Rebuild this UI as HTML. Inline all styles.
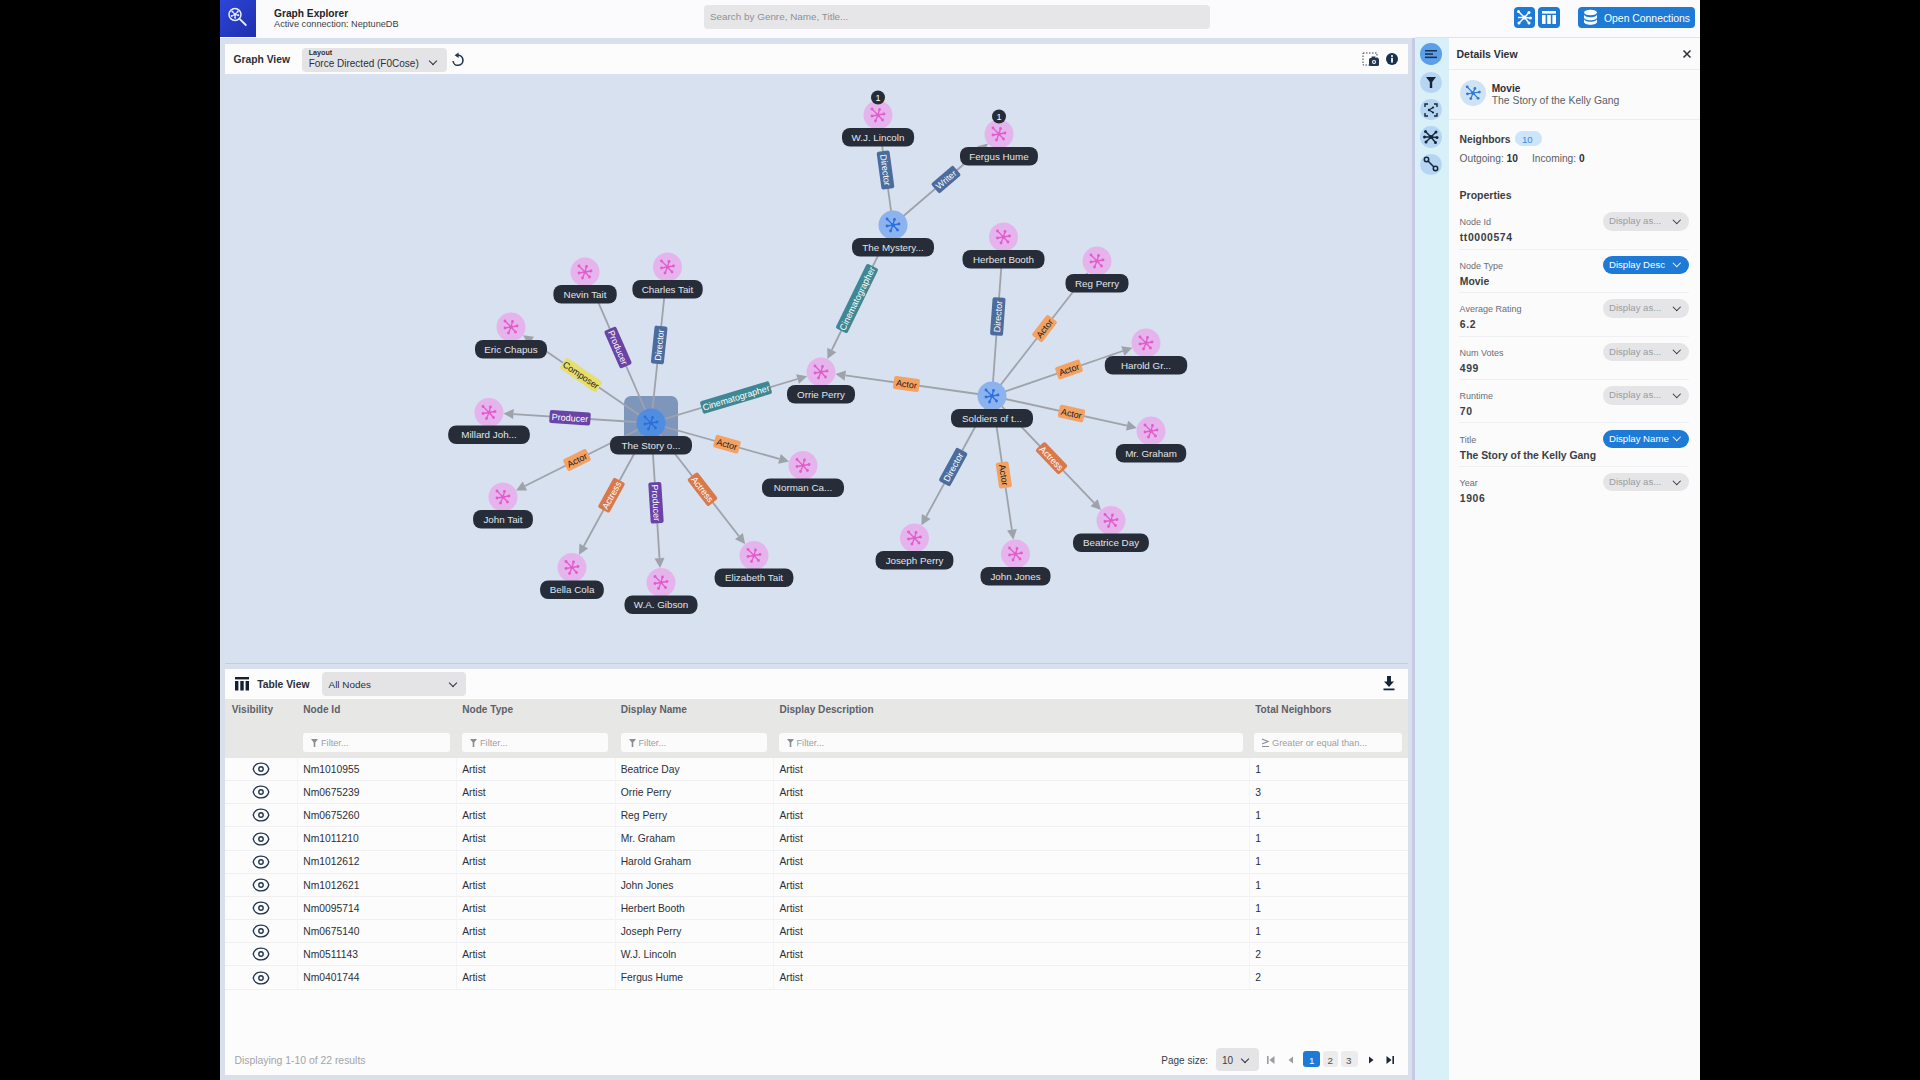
<!DOCTYPE html>
<html><head><meta charset="utf-8"><title>Graph Explorer</title>
<style>
*{box-sizing:border-box;margin:0;padding:0}
html,body{width:1920px;height:1080px;overflow:hidden;background:#000;font-family:"Liberation Sans",sans-serif;color:#2b2f36}
.abs{position:absolute}
#app{position:absolute;left:220px;top:0;width:1480px;height:1080px;background:#d7e0ec}
#hdr{position:absolute;left:220px;top:0;width:1480px;height:38px;background:#fbfbfd}
.t{position:absolute;white-space:nowrap;line-height:1;margin-top:1px}
.b{font-weight:700}
.panel{position:absolute;background:#fcfcfd}
.btn{position:absolute;background:#1d7ad6;border-radius:4px}
.sel{position:absolute;background:#e4e4e6;border-radius:4px}
.chev{position:absolute;width:6px;height:6px;border-right:1.6px solid #2b2f36;border-bottom:1.6px solid #2b2f36;transform:rotate(45deg)}
</style></head><body>
<div id="app"></div>
<div id="hdr"></div>
<!-- header -->
<div class="abs" style="left:220px;top:0;width:36px;height:37px;background:linear-gradient(135deg,#2c46d8,#1f2fae)"></div>
<svg class="abs" style="left:227px;top:6px" width="22" height="22" viewBox="0 0 22 22">
 <circle cx="8" cy="8.4" r="6" fill="none" stroke="#e8ecff" stroke-width="1.5"/>
 <line x1="12.3" y1="12.7" x2="18.8" y2="19" stroke="#e8ecff" stroke-width="1.8" stroke-linecap="round"/>
 <g stroke="#e8ecff" stroke-width="1.1"><line x1="8" y1="8.4" x2="5.3" y2="5.4"/><line x1="8" y1="8.4" x2="10.8" y2="5.6"/><line x1="8" y1="8.4" x2="11.3" y2="9.3"/><line x1="8" y1="8.4" x2="8.1" y2="11.8"/><line x1="8" y1="8.4" x2="4.6" y2="9.9"/></g>
 <g fill="#e8ecff"><circle cx="8" cy="8.4" r="1.3"/><circle cx="5.3" cy="5.4" r="1"/><circle cx="10.8" cy="5.6" r="1"/><circle cx="11.3" cy="9.3" r="1"/><circle cx="8.1" cy="11.8" r="1"/><circle cx="4.6" cy="9.9" r="1"/></g>
</svg>
<div class="t b" style="left:274px;top:8px;font-size:10.2px;color:#1f2328">Graph Explorer</div>
<div class="t" style="left:274px;top:19px;font-size:9.2px;color:#3a3f46">Active connection: NeptuneDB</div>
<div class="abs" style="left:704px;top:5px;width:506px;height:24px;background:#e6e6e8;border-radius:4px"></div>
<div class="t" style="left:710px;top:11.3px;font-size:9.9px;color:#8e9095">Search by Genre, Name, Title...</div>
<div class="btn" style="left:1514px;top:7px;width:21px;height:21px"></div>
<svg class="abs" style="left:1514px;top:7px" width="21" height="21" viewBox="0 0 21 21">
 <g stroke="#fff" stroke-width="1.5"><line x1="10.5" y1="10.5" x2="4.5" y2="4.5"/><line x1="10.5" y1="10.5" x2="15" y2="5.5"/><line x1="10.5" y1="10.5" x2="16.5" y2="11"/><line x1="10.5" y1="10.5" x2="15" y2="16"/><line x1="10.5" y1="10.5" x2="5" y2="16"/><line x1="10.5" y1="10.5" x2="4" y2="10.5"/></g>
 <g fill="#fff"><circle cx="10.5" cy="10.5" r="2"/><circle cx="4.5" cy="4.5" r="1.5"/><circle cx="15" cy="5.5" r="1.5"/><circle cx="16.5" cy="11" r="1.5"/><circle cx="15" cy="16" r="1.5"/><circle cx="5" cy="16" r="1.5"/></g>
</svg>
<div class="btn" style="left:1538px;top:7px;width:22px;height:21px"></div>
<svg class="abs" style="left:1538px;top:7px" width="22" height="21" viewBox="0 0 22 21">
 <rect x="4" y="4" width="14" height="2.6" fill="#fff"/><rect x="4" y="8" width="3.6" height="9" fill="#fff"/><rect x="9.2" y="8" width="3.6" height="9" fill="#fff"/><rect x="14.4" y="8" width="3.6" height="9" fill="#fff"/>
</svg>
<div class="btn" style="left:1578px;top:7px;width:117px;height:21px"></div>
<svg class="abs" style="left:1583px;top:9px" width="16" height="17" viewBox="0 0 16 17">
 <ellipse cx="7.5" cy="3.5" rx="6.5" ry="2.8" fill="#fff"/>
 <path d="M1 5.5 v3 c0 1.6 2.9 2.8 6.5 2.8 s6.5-1.2 6.5-2.8 v-3 c0 1.6-2.9 2.8-6.5 2.8 S1 7.1 1 5.5z" fill="#fff"/>
 <path d="M1 10 v3 c0 1.6 2.9 2.8 6.5 2.8 s6.5-1.2 6.5-2.8 v-3 c0 1.6-2.9 2.8-6.5 2.8 S1 11.6 1 10z" fill="#fff"/>
</svg>
<div class="t" style="left:1604px;top:13px;font-size:10.4px;color:#fff">Open Connections</div>

<!-- graph panel -->
<div class="panel" style="left:225px;top:44px;width:1183px;height:30px"></div>
<div class="t b" style="left:233.5px;top:54px;font-size:10.3px;color:#2b2f36">Graph View</div>
<div class="sel" style="left:302px;top:47.5px;width:145px;height:24.5px"></div>
<div class="t b" style="left:308.7px;top:48px;font-size:7.2px;color:#2b2f36">Layout</div>
<div class="t" style="left:308.7px;top:57.5px;font-size:10px;color:#2b2f36">Force Directed (F0Cose)</div>
<div class="chev" style="left:430px;top:57.5px"></div>
<svg class="abs" style="left:450px;top:51px" width="15" height="15" viewBox="0 0 15 15">
 <path d="M3 10 A5 5 0 1 0 7.6 4.3" fill="none" stroke="#22364f" stroke-width="1.6"/>
 <polygon points="4.6,4.3 8.6,1.6 8.6,7" fill="#22364f"/>
</svg>
<svg class="abs" style="left:1362px;top:52px" width="18" height="15" viewBox="0 0 18 15">
 <rect x="1" y="1" width="14" height="12" fill="none" stroke="#3a4658" stroke-width="1" stroke-dasharray="1.5 1.5"/>
 <rect x="7" y="6" width="10" height="8" rx="1.5" fill="#22364f"/><rect x="9.5" y="4.5" width="4" height="2" fill="#22364f"/>
 <circle cx="12" cy="10" r="2" fill="#fff"/><circle cx="12" cy="10" r="1" fill="#22364f"/>
</svg>
<svg class="abs" style="left:1385px;top:52px" width="14" height="14" viewBox="0 0 14 14">
 <circle cx="7" cy="7" r="6" fill="#16324f"/><rect x="6.1" y="5.8" width="1.8" height="4.8" fill="#fff"/><circle cx="7" cy="3.9" r="1" fill="#fff"/>
</svg>
<div class="abs" style="left:225px;top:74px;width:1183px;height:589px;background:#d8e1ef;overflow:hidden">
<svg width="1183" height="589" viewBox="225 74 1183 589" style="position:absolute;left:0;top:0">
<rect x="624" y="396" width="54" height="54" rx="7" fill="#7f96bc"/>
<line x1="651" y1="423" x2="594.8" y2="294.4" stroke="#9ea3ab" stroke-width="1.8"/>
<polygon points="590.8,285.3 599.4,292.4 590.2,296.5" fill="#9ea3ab"/>
<line x1="651" y1="423" x2="664.9" y2="291.4" stroke="#9ea3ab" stroke-width="1.8"/>
<polygon points="666.0,281.4 669.9,291.9 660.0,290.8" fill="#9ea3ab"/>
<line x1="651" y1="423" x2="531.2" y2="340.9" stroke="#9ea3ab" stroke-width="1.8"/>
<polygon points="523.0,335.2 534.0,336.7 528.4,345.0" fill="#9ea3ab"/>
<line x1="651" y1="423" x2="513.4" y2="414.1" stroke="#9ea3ab" stroke-width="1.8"/>
<polygon points="503.5,413.4 513.8,409.1 513.1,419.1" fill="#9ea3ab"/>
<line x1="651" y1="423" x2="797.5" y2="379.0" stroke="#9ea3ab" stroke-width="1.8"/>
<polygon points="807.1,376.2 799.0,383.8 796.1,374.3" fill="#9ea3ab"/>
<line x1="651" y1="423" x2="779.4" y2="458.9" stroke="#9ea3ab" stroke-width="1.8"/>
<polygon points="789.0,461.6 778.1,463.7 780.8,454.1" fill="#9ea3ab"/>
<line x1="651" y1="423" x2="524.9" y2="486.0" stroke="#9ea3ab" stroke-width="1.8"/>
<polygon points="516.0,490.5 522.7,481.6 527.1,490.5" fill="#9ea3ab"/>
<line x1="651" y1="423" x2="583.8" y2="546.0" stroke="#9ea3ab" stroke-width="1.8"/>
<polygon points="579.0,554.8 579.4,543.6 588.1,548.4" fill="#9ea3ab"/>
<line x1="651" y1="423" x2="659.5" y2="558.0" stroke="#9ea3ab" stroke-width="1.8"/>
<polygon points="660.1,568.0 654.5,558.4 664.5,557.7" fill="#9ea3ab"/>
<line x1="651" y1="423" x2="739.0" y2="536.2" stroke="#9ea3ab" stroke-width="1.8"/>
<polygon points="745.1,544.1 735.0,539.2 742.9,533.1" fill="#9ea3ab"/>
<line x1="893" y1="225" x2="881.3" y2="139.3" stroke="#9ea3ab" stroke-width="1.8"/>
<polygon points="880.0,129.4 886.3,138.6 876.4,140.0" fill="#9ea3ab"/>
<line x1="893" y1="225" x2="980.4" y2="150.0" stroke="#9ea3ab" stroke-width="1.8"/>
<polygon points="988.0,143.4 983.7,153.8 977.2,146.2" fill="#9ea3ab"/>
<line x1="893" y1="225" x2="831.8" y2="350.0" stroke="#9ea3ab" stroke-width="1.8"/>
<polygon points="827.4,359.0 827.3,347.8 836.3,352.2" fill="#9ea3ab"/>
<line x1="992" y1="396" x2="1001.7" y2="261.4" stroke="#9ea3ab" stroke-width="1.8"/>
<polygon points="1002.5,251.5 1006.7,261.8 996.7,261.1" fill="#9ea3ab"/>
<line x1="992" y1="396" x2="1082.0" y2="280.3" stroke="#9ea3ab" stroke-width="1.8"/>
<polygon points="1088.1,272.4 1085.9,283.4 1078.0,277.3" fill="#9ea3ab"/>
<line x1="992" y1="396" x2="1122.8" y2="351.0" stroke="#9ea3ab" stroke-width="1.8"/>
<polygon points="1132.3,347.7 1124.5,355.7 1121.2,346.2" fill="#9ea3ab"/>
<line x1="992" y1="396" x2="845.3" y2="375.4" stroke="#9ea3ab" stroke-width="1.8"/>
<polygon points="835.4,374.0 846.0,370.5 844.6,380.4" fill="#9ea3ab"/>
<line x1="992" y1="396" x2="1127.1" y2="425.7" stroke="#9ea3ab" stroke-width="1.8"/>
<polygon points="1136.8,427.9 1126.0,430.6 1128.1,420.8" fill="#9ea3ab"/>
<line x1="992" y1="396" x2="1094.1" y2="502.8" stroke="#9ea3ab" stroke-width="1.8"/>
<polygon points="1101.0,510.0 1090.5,506.2 1097.7,499.3" fill="#9ea3ab"/>
<line x1="992" y1="396" x2="1011.9" y2="529.8" stroke="#9ea3ab" stroke-width="1.8"/>
<polygon points="1013.4,539.7 1007.0,530.5 1016.8,529.0" fill="#9ea3ab"/>
<line x1="992" y1="396" x2="926.2" y2="516.5" stroke="#9ea3ab" stroke-width="1.8"/>
<polygon points="921.4,525.3 921.8,514.1 930.6,518.9" fill="#9ea3ab"/>
<g transform="translate(618.0,347.5) rotate(66.4)"><rect x="-20.5" y="-6.5" width="41" height="13" rx="2" fill="#6a43a6"/><text x="0" y="3.3" text-anchor="middle" font-size="9" fill="#ffffff">Producer</text></g>
<g transform="translate(659.2,345.0) rotate(-84.0)"><rect x="-19.0" y="-6.5" width="38" height="13" rx="2" fill="#4b6c9c"/><text x="0" y="3.3" text-anchor="middle" font-size="9" fill="#ffffff">Director</text></g>
<g transform="translate(581.0,375.0) rotate(34.4)"><rect x="-22.0" y="-6.5" width="44" height="13" rx="2" fill="#e6df6e"/><text x="0" y="3.3" text-anchor="middle" font-size="9" fill="#1a1a1a">Composer</text></g>
<g transform="translate(570.0,417.8) rotate(3.7)"><rect x="-20.5" y="-6.5" width="41" height="13" rx="2" fill="#6a43a6"/><text x="0" y="3.3" text-anchor="middle" font-size="9" fill="#ffffff">Producer</text></g>
<g transform="translate(736.0,397.5) rotate(-16.7)"><rect x="-36.0" y="-6.5" width="72" height="13" rx="2" fill="#3f8893"/><text x="0" y="3.3" text-anchor="middle" font-size="9" fill="#ffffff">Cinematographer</text></g>
<g transform="translate(727.0,444.2) rotate(15.6)"><rect x="-13.0" y="-6.5" width="26" height="13" rx="2" fill="#f3a264"/><text x="0" y="3.3" text-anchor="middle" font-size="9" fill="#1a1a1a">Actor</text></g>
<g transform="translate(577.0,460.0) rotate(-26.6)"><rect x="-13.0" y="-6.5" width="26" height="13" rx="2" fill="#f3a264"/><text x="0" y="3.3" text-anchor="middle" font-size="9" fill="#1a1a1a">Actor</text></g>
<g transform="translate(611.5,495.2) rotate(-61.3)"><rect x="-17.0" y="-6.5" width="34" height="13" rx="2" fill="#d9794a"/><text x="0" y="3.3" text-anchor="middle" font-size="9" fill="#ffffff">Actress</text></g>
<g transform="translate(656.0,502.8) rotate(86.4)"><rect x="-20.5" y="-6.5" width="41" height="13" rx="2" fill="#6a43a6"/><text x="0" y="3.3" text-anchor="middle" font-size="9" fill="#ffffff">Producer</text></g>
<g transform="translate(702.5,489.2) rotate(52.1)"><rect x="-17.0" y="-6.5" width="34" height="13" rx="2" fill="#d9794a"/><text x="0" y="3.3" text-anchor="middle" font-size="9" fill="#ffffff">Actress</text></g>
<g transform="translate(885.5,170.0) rotate(82.2)"><rect x="-19.0" y="-6.5" width="38" height="13" rx="2" fill="#4b6c9c"/><text x="0" y="3.3" text-anchor="middle" font-size="9" fill="#ffffff">Director</text></g>
<g transform="translate(946.0,179.5) rotate(-40.6)"><rect x="-14.5" y="-6.5" width="29" height="13" rx="2" fill="#4b6c9c"/><text x="0" y="3.3" text-anchor="middle" font-size="9" fill="#ffffff">Writer</text></g>
<g transform="translate(857.0,298.5) rotate(-63.9)"><rect x="-36.0" y="-6.5" width="72" height="13" rx="2" fill="#3f8893"/><text x="0" y="3.3" text-anchor="middle" font-size="9" fill="#ffffff">Cinematographer</text></g>
<g transform="translate(997.8,316.5) rotate(-85.9)"><rect x="-19.0" y="-6.5" width="38" height="13" rx="2" fill="#4b6c9c"/><text x="0" y="3.3" text-anchor="middle" font-size="9" fill="#ffffff">Director</text></g>
<g transform="translate(1044.5,328.5) rotate(-52.1)"><rect x="-13.0" y="-6.5" width="26" height="13" rx="2" fill="#f3a264"/><text x="0" y="3.3" text-anchor="middle" font-size="9" fill="#1a1a1a">Actor</text></g>
<g transform="translate(1069.0,369.5) rotate(-19.0)"><rect x="-13.0" y="-6.5" width="26" height="13" rx="2" fill="#f3a264"/><text x="0" y="3.3" text-anchor="middle" font-size="9" fill="#1a1a1a">Actor</text></g>
<g transform="translate(906.5,384.0) rotate(8.0)"><rect x="-13.0" y="-6.5" width="26" height="13" rx="2" fill="#f3a264"/><text x="0" y="3.3" text-anchor="middle" font-size="9" fill="#1a1a1a">Actor</text></g>
<g transform="translate(1071.5,413.5) rotate(12.4)"><rect x="-13.0" y="-6.5" width="26" height="13" rx="2" fill="#f3a264"/><text x="0" y="3.3" text-anchor="middle" font-size="9" fill="#1a1a1a">Actor</text></g>
<g transform="translate(1051.5,458.2) rotate(46.3)"><rect x="-17.0" y="-6.5" width="34" height="13" rx="2" fill="#d9794a"/><text x="0" y="3.3" text-anchor="middle" font-size="9" fill="#ffffff">Actress</text></g>
<g transform="translate(1003.8,475.0) rotate(81.5)"><rect x="-13.0" y="-6.5" width="26" height="13" rx="2" fill="#f3a264"/><text x="0" y="3.3" text-anchor="middle" font-size="9" fill="#1a1a1a">Actor</text></g>
<g transform="translate(953.2,467.0) rotate(-61.4)"><rect x="-19.0" y="-6.5" width="38" height="13" rx="2" fill="#4b6c9c"/><text x="0" y="3.3" text-anchor="middle" font-size="9" fill="#ffffff">Director</text></g>
<circle cx="651" cy="423" r="14.5" fill="#4f8de0"/>
<line x1="651.0" y1="423.0" x2="645.0" y2="417.0" stroke="#2a6fdc" stroke-width="1.3"/><circle cx="645.0" cy="417.0" r="1.4" fill="#2a6fdc"/><line x1="651.0" y1="423.0" x2="652.5" y2="417.5" stroke="#2a6fdc" stroke-width="1.3"/><circle cx="652.5" cy="417.5" r="1.4" fill="#2a6fdc"/><line x1="651.0" y1="423.0" x2="657.0" y2="422.0" stroke="#2a6fdc" stroke-width="1.3"/><circle cx="657.0" cy="422.0" r="1.4" fill="#2a6fdc"/><line x1="651.0" y1="423.0" x2="655.5" y2="428.0" stroke="#2a6fdc" stroke-width="1.3"/><circle cx="655.5" cy="428.0" r="1.4" fill="#2a6fdc"/><line x1="651.0" y1="423.0" x2="648.5" y2="429.0" stroke="#2a6fdc" stroke-width="1.3"/><circle cx="648.5" cy="429.0" r="1.4" fill="#2a6fdc"/><line x1="651.0" y1="423.0" x2="645.0" y2="424.0" stroke="#2a6fdc" stroke-width="1.3"/><circle cx="645.0" cy="424.0" r="1.4" fill="#2a6fdc"/><circle cx="651.0" cy="423.0" r="1.8" fill="#2a6fdc"/>
<circle cx="893" cy="225" r="14.5" fill="#8db3ef"/>
<line x1="893.0" y1="225.0" x2="887.0" y2="219.0" stroke="#2a6fdc" stroke-width="1.3"/><circle cx="887.0" cy="219.0" r="1.4" fill="#2a6fdc"/><line x1="893.0" y1="225.0" x2="894.5" y2="219.5" stroke="#2a6fdc" stroke-width="1.3"/><circle cx="894.5" cy="219.5" r="1.4" fill="#2a6fdc"/><line x1="893.0" y1="225.0" x2="899.0" y2="224.0" stroke="#2a6fdc" stroke-width="1.3"/><circle cx="899.0" cy="224.0" r="1.4" fill="#2a6fdc"/><line x1="893.0" y1="225.0" x2="897.5" y2="230.0" stroke="#2a6fdc" stroke-width="1.3"/><circle cx="897.5" cy="230.0" r="1.4" fill="#2a6fdc"/><line x1="893.0" y1="225.0" x2="890.5" y2="231.0" stroke="#2a6fdc" stroke-width="1.3"/><circle cx="890.5" cy="231.0" r="1.4" fill="#2a6fdc"/><line x1="893.0" y1="225.0" x2="887.0" y2="226.0" stroke="#2a6fdc" stroke-width="1.3"/><circle cx="887.0" cy="226.0" r="1.4" fill="#2a6fdc"/><circle cx="893.0" cy="225.0" r="1.8" fill="#2a6fdc"/>
<circle cx="992" cy="396" r="14.5" fill="#8db3ef"/>
<line x1="992.0" y1="396.0" x2="986.0" y2="390.0" stroke="#2a6fdc" stroke-width="1.3"/><circle cx="986.0" cy="390.0" r="1.4" fill="#2a6fdc"/><line x1="992.0" y1="396.0" x2="993.5" y2="390.5" stroke="#2a6fdc" stroke-width="1.3"/><circle cx="993.5" cy="390.5" r="1.4" fill="#2a6fdc"/><line x1="992.0" y1="396.0" x2="998.0" y2="395.0" stroke="#2a6fdc" stroke-width="1.3"/><circle cx="998.0" cy="395.0" r="1.4" fill="#2a6fdc"/><line x1="992.0" y1="396.0" x2="996.5" y2="401.0" stroke="#2a6fdc" stroke-width="1.3"/><circle cx="996.5" cy="401.0" r="1.4" fill="#2a6fdc"/><line x1="992.0" y1="396.0" x2="989.5" y2="402.0" stroke="#2a6fdc" stroke-width="1.3"/><circle cx="989.5" cy="402.0" r="1.4" fill="#2a6fdc"/><line x1="992.0" y1="396.0" x2="986.0" y2="397.0" stroke="#2a6fdc" stroke-width="1.3"/><circle cx="986.0" cy="397.0" r="1.4" fill="#2a6fdc"/><circle cx="992.0" cy="396.0" r="1.8" fill="#2a6fdc"/>
<circle cx="878" cy="115" r="14.5" fill="#e6b4ec"/>
<line x1="878.0" y1="115.0" x2="872.0" y2="109.0" stroke="#e35ccb" stroke-width="1.3"/><circle cx="872.0" cy="109.0" r="1.4" fill="#e35ccb"/><line x1="878.0" y1="115.0" x2="879.5" y2="109.5" stroke="#e35ccb" stroke-width="1.3"/><circle cx="879.5" cy="109.5" r="1.4" fill="#e35ccb"/><line x1="878.0" y1="115.0" x2="884.0" y2="114.0" stroke="#e35ccb" stroke-width="1.3"/><circle cx="884.0" cy="114.0" r="1.4" fill="#e35ccb"/><line x1="878.0" y1="115.0" x2="882.5" y2="120.0" stroke="#e35ccb" stroke-width="1.3"/><circle cx="882.5" cy="120.0" r="1.4" fill="#e35ccb"/><line x1="878.0" y1="115.0" x2="875.5" y2="121.0" stroke="#e35ccb" stroke-width="1.3"/><circle cx="875.5" cy="121.0" r="1.4" fill="#e35ccb"/><line x1="878.0" y1="115.0" x2="872.0" y2="116.0" stroke="#e35ccb" stroke-width="1.3"/><circle cx="872.0" cy="116.0" r="1.4" fill="#e35ccb"/><circle cx="878.0" cy="115.0" r="1.8" fill="#e35ccb"/>
<circle cx="999" cy="134" r="14.5" fill="#e6b4ec"/>
<line x1="999.0" y1="134.0" x2="993.0" y2="128.0" stroke="#e35ccb" stroke-width="1.3"/><circle cx="993.0" cy="128.0" r="1.4" fill="#e35ccb"/><line x1="999.0" y1="134.0" x2="1000.5" y2="128.5" stroke="#e35ccb" stroke-width="1.3"/><circle cx="1000.5" cy="128.5" r="1.4" fill="#e35ccb"/><line x1="999.0" y1="134.0" x2="1005.0" y2="133.0" stroke="#e35ccb" stroke-width="1.3"/><circle cx="1005.0" cy="133.0" r="1.4" fill="#e35ccb"/><line x1="999.0" y1="134.0" x2="1003.5" y2="139.0" stroke="#e35ccb" stroke-width="1.3"/><circle cx="1003.5" cy="139.0" r="1.4" fill="#e35ccb"/><line x1="999.0" y1="134.0" x2="996.5" y2="140.0" stroke="#e35ccb" stroke-width="1.3"/><circle cx="996.5" cy="140.0" r="1.4" fill="#e35ccb"/><line x1="999.0" y1="134.0" x2="993.0" y2="135.0" stroke="#e35ccb" stroke-width="1.3"/><circle cx="993.0" cy="135.0" r="1.4" fill="#e35ccb"/><circle cx="999.0" cy="134.0" r="1.8" fill="#e35ccb"/>
<circle cx="585" cy="272" r="14.5" fill="#e6b4ec"/>
<line x1="585.0" y1="272.0" x2="579.0" y2="266.0" stroke="#e35ccb" stroke-width="1.3"/><circle cx="579.0" cy="266.0" r="1.4" fill="#e35ccb"/><line x1="585.0" y1="272.0" x2="586.5" y2="266.5" stroke="#e35ccb" stroke-width="1.3"/><circle cx="586.5" cy="266.5" r="1.4" fill="#e35ccb"/><line x1="585.0" y1="272.0" x2="591.0" y2="271.0" stroke="#e35ccb" stroke-width="1.3"/><circle cx="591.0" cy="271.0" r="1.4" fill="#e35ccb"/><line x1="585.0" y1="272.0" x2="589.5" y2="277.0" stroke="#e35ccb" stroke-width="1.3"/><circle cx="589.5" cy="277.0" r="1.4" fill="#e35ccb"/><line x1="585.0" y1="272.0" x2="582.5" y2="278.0" stroke="#e35ccb" stroke-width="1.3"/><circle cx="582.5" cy="278.0" r="1.4" fill="#e35ccb"/><line x1="585.0" y1="272.0" x2="579.0" y2="273.0" stroke="#e35ccb" stroke-width="1.3"/><circle cx="579.0" cy="273.0" r="1.4" fill="#e35ccb"/><circle cx="585.0" cy="272.0" r="1.8" fill="#e35ccb"/>
<circle cx="667.5" cy="267" r="14.5" fill="#e6b4ec"/>
<line x1="667.5" y1="267.0" x2="661.5" y2="261.0" stroke="#e35ccb" stroke-width="1.3"/><circle cx="661.5" cy="261.0" r="1.4" fill="#e35ccb"/><line x1="667.5" y1="267.0" x2="669.0" y2="261.5" stroke="#e35ccb" stroke-width="1.3"/><circle cx="669.0" cy="261.5" r="1.4" fill="#e35ccb"/><line x1="667.5" y1="267.0" x2="673.5" y2="266.0" stroke="#e35ccb" stroke-width="1.3"/><circle cx="673.5" cy="266.0" r="1.4" fill="#e35ccb"/><line x1="667.5" y1="267.0" x2="672.0" y2="272.0" stroke="#e35ccb" stroke-width="1.3"/><circle cx="672.0" cy="272.0" r="1.4" fill="#e35ccb"/><line x1="667.5" y1="267.0" x2="665.0" y2="273.0" stroke="#e35ccb" stroke-width="1.3"/><circle cx="665.0" cy="273.0" r="1.4" fill="#e35ccb"/><line x1="667.5" y1="267.0" x2="661.5" y2="268.0" stroke="#e35ccb" stroke-width="1.3"/><circle cx="661.5" cy="268.0" r="1.4" fill="#e35ccb"/><circle cx="667.5" cy="267.0" r="1.8" fill="#e35ccb"/>
<circle cx="511" cy="327" r="14.5" fill="#e6b4ec"/>
<line x1="511.0" y1="327.0" x2="505.0" y2="321.0" stroke="#e35ccb" stroke-width="1.3"/><circle cx="505.0" cy="321.0" r="1.4" fill="#e35ccb"/><line x1="511.0" y1="327.0" x2="512.5" y2="321.5" stroke="#e35ccb" stroke-width="1.3"/><circle cx="512.5" cy="321.5" r="1.4" fill="#e35ccb"/><line x1="511.0" y1="327.0" x2="517.0" y2="326.0" stroke="#e35ccb" stroke-width="1.3"/><circle cx="517.0" cy="326.0" r="1.4" fill="#e35ccb"/><line x1="511.0" y1="327.0" x2="515.5" y2="332.0" stroke="#e35ccb" stroke-width="1.3"/><circle cx="515.5" cy="332.0" r="1.4" fill="#e35ccb"/><line x1="511.0" y1="327.0" x2="508.5" y2="333.0" stroke="#e35ccb" stroke-width="1.3"/><circle cx="508.5" cy="333.0" r="1.4" fill="#e35ccb"/><line x1="511.0" y1="327.0" x2="505.0" y2="328.0" stroke="#e35ccb" stroke-width="1.3"/><circle cx="505.0" cy="328.0" r="1.4" fill="#e35ccb"/><circle cx="511.0" cy="327.0" r="1.8" fill="#e35ccb"/>
<circle cx="489" cy="412.5" r="14.5" fill="#e6b4ec"/>
<line x1="489.0" y1="412.5" x2="483.0" y2="406.5" stroke="#e35ccb" stroke-width="1.3"/><circle cx="483.0" cy="406.5" r="1.4" fill="#e35ccb"/><line x1="489.0" y1="412.5" x2="490.5" y2="407.0" stroke="#e35ccb" stroke-width="1.3"/><circle cx="490.5" cy="407.0" r="1.4" fill="#e35ccb"/><line x1="489.0" y1="412.5" x2="495.0" y2="411.5" stroke="#e35ccb" stroke-width="1.3"/><circle cx="495.0" cy="411.5" r="1.4" fill="#e35ccb"/><line x1="489.0" y1="412.5" x2="493.5" y2="417.5" stroke="#e35ccb" stroke-width="1.3"/><circle cx="493.5" cy="417.5" r="1.4" fill="#e35ccb"/><line x1="489.0" y1="412.5" x2="486.5" y2="418.5" stroke="#e35ccb" stroke-width="1.3"/><circle cx="486.5" cy="418.5" r="1.4" fill="#e35ccb"/><line x1="489.0" y1="412.5" x2="483.0" y2="413.5" stroke="#e35ccb" stroke-width="1.3"/><circle cx="483.0" cy="413.5" r="1.4" fill="#e35ccb"/><circle cx="489.0" cy="412.5" r="1.8" fill="#e35ccb"/>
<circle cx="821" cy="372" r="14.5" fill="#e6b4ec"/>
<line x1="821.0" y1="372.0" x2="815.0" y2="366.0" stroke="#e35ccb" stroke-width="1.3"/><circle cx="815.0" cy="366.0" r="1.4" fill="#e35ccb"/><line x1="821.0" y1="372.0" x2="822.5" y2="366.5" stroke="#e35ccb" stroke-width="1.3"/><circle cx="822.5" cy="366.5" r="1.4" fill="#e35ccb"/><line x1="821.0" y1="372.0" x2="827.0" y2="371.0" stroke="#e35ccb" stroke-width="1.3"/><circle cx="827.0" cy="371.0" r="1.4" fill="#e35ccb"/><line x1="821.0" y1="372.0" x2="825.5" y2="377.0" stroke="#e35ccb" stroke-width="1.3"/><circle cx="825.5" cy="377.0" r="1.4" fill="#e35ccb"/><line x1="821.0" y1="372.0" x2="818.5" y2="378.0" stroke="#e35ccb" stroke-width="1.3"/><circle cx="818.5" cy="378.0" r="1.4" fill="#e35ccb"/><line x1="821.0" y1="372.0" x2="815.0" y2="373.0" stroke="#e35ccb" stroke-width="1.3"/><circle cx="815.0" cy="373.0" r="1.4" fill="#e35ccb"/><circle cx="821.0" cy="372.0" r="1.8" fill="#e35ccb"/>
<circle cx="803" cy="465.5" r="14.5" fill="#e6b4ec"/>
<line x1="803.0" y1="465.5" x2="797.0" y2="459.5" stroke="#e35ccb" stroke-width="1.3"/><circle cx="797.0" cy="459.5" r="1.4" fill="#e35ccb"/><line x1="803.0" y1="465.5" x2="804.5" y2="460.0" stroke="#e35ccb" stroke-width="1.3"/><circle cx="804.5" cy="460.0" r="1.4" fill="#e35ccb"/><line x1="803.0" y1="465.5" x2="809.0" y2="464.5" stroke="#e35ccb" stroke-width="1.3"/><circle cx="809.0" cy="464.5" r="1.4" fill="#e35ccb"/><line x1="803.0" y1="465.5" x2="807.5" y2="470.5" stroke="#e35ccb" stroke-width="1.3"/><circle cx="807.5" cy="470.5" r="1.4" fill="#e35ccb"/><line x1="803.0" y1="465.5" x2="800.5" y2="471.5" stroke="#e35ccb" stroke-width="1.3"/><circle cx="800.5" cy="471.5" r="1.4" fill="#e35ccb"/><line x1="803.0" y1="465.5" x2="797.0" y2="466.5" stroke="#e35ccb" stroke-width="1.3"/><circle cx="797.0" cy="466.5" r="1.4" fill="#e35ccb"/><circle cx="803.0" cy="465.5" r="1.8" fill="#e35ccb"/>
<circle cx="503" cy="497" r="14.5" fill="#e6b4ec"/>
<line x1="503.0" y1="497.0" x2="497.0" y2="491.0" stroke="#e35ccb" stroke-width="1.3"/><circle cx="497.0" cy="491.0" r="1.4" fill="#e35ccb"/><line x1="503.0" y1="497.0" x2="504.5" y2="491.5" stroke="#e35ccb" stroke-width="1.3"/><circle cx="504.5" cy="491.5" r="1.4" fill="#e35ccb"/><line x1="503.0" y1="497.0" x2="509.0" y2="496.0" stroke="#e35ccb" stroke-width="1.3"/><circle cx="509.0" cy="496.0" r="1.4" fill="#e35ccb"/><line x1="503.0" y1="497.0" x2="507.5" y2="502.0" stroke="#e35ccb" stroke-width="1.3"/><circle cx="507.5" cy="502.0" r="1.4" fill="#e35ccb"/><line x1="503.0" y1="497.0" x2="500.5" y2="503.0" stroke="#e35ccb" stroke-width="1.3"/><circle cx="500.5" cy="503.0" r="1.4" fill="#e35ccb"/><line x1="503.0" y1="497.0" x2="497.0" y2="498.0" stroke="#e35ccb" stroke-width="1.3"/><circle cx="497.0" cy="498.0" r="1.4" fill="#e35ccb"/><circle cx="503.0" cy="497.0" r="1.8" fill="#e35ccb"/>
<circle cx="572" cy="567.5" r="14.5" fill="#e6b4ec"/>
<line x1="572.0" y1="567.5" x2="566.0" y2="561.5" stroke="#e35ccb" stroke-width="1.3"/><circle cx="566.0" cy="561.5" r="1.4" fill="#e35ccb"/><line x1="572.0" y1="567.5" x2="573.5" y2="562.0" stroke="#e35ccb" stroke-width="1.3"/><circle cx="573.5" cy="562.0" r="1.4" fill="#e35ccb"/><line x1="572.0" y1="567.5" x2="578.0" y2="566.5" stroke="#e35ccb" stroke-width="1.3"/><circle cx="578.0" cy="566.5" r="1.4" fill="#e35ccb"/><line x1="572.0" y1="567.5" x2="576.5" y2="572.5" stroke="#e35ccb" stroke-width="1.3"/><circle cx="576.5" cy="572.5" r="1.4" fill="#e35ccb"/><line x1="572.0" y1="567.5" x2="569.5" y2="573.5" stroke="#e35ccb" stroke-width="1.3"/><circle cx="569.5" cy="573.5" r="1.4" fill="#e35ccb"/><line x1="572.0" y1="567.5" x2="566.0" y2="568.5" stroke="#e35ccb" stroke-width="1.3"/><circle cx="566.0" cy="568.5" r="1.4" fill="#e35ccb"/><circle cx="572.0" cy="567.5" r="1.8" fill="#e35ccb"/>
<circle cx="661" cy="582.5" r="14.5" fill="#e6b4ec"/>
<line x1="661.0" y1="582.5" x2="655.0" y2="576.5" stroke="#e35ccb" stroke-width="1.3"/><circle cx="655.0" cy="576.5" r="1.4" fill="#e35ccb"/><line x1="661.0" y1="582.5" x2="662.5" y2="577.0" stroke="#e35ccb" stroke-width="1.3"/><circle cx="662.5" cy="577.0" r="1.4" fill="#e35ccb"/><line x1="661.0" y1="582.5" x2="667.0" y2="581.5" stroke="#e35ccb" stroke-width="1.3"/><circle cx="667.0" cy="581.5" r="1.4" fill="#e35ccb"/><line x1="661.0" y1="582.5" x2="665.5" y2="587.5" stroke="#e35ccb" stroke-width="1.3"/><circle cx="665.5" cy="587.5" r="1.4" fill="#e35ccb"/><line x1="661.0" y1="582.5" x2="658.5" y2="588.5" stroke="#e35ccb" stroke-width="1.3"/><circle cx="658.5" cy="588.5" r="1.4" fill="#e35ccb"/><line x1="661.0" y1="582.5" x2="655.0" y2="583.5" stroke="#e35ccb" stroke-width="1.3"/><circle cx="655.0" cy="583.5" r="1.4" fill="#e35ccb"/><circle cx="661.0" cy="582.5" r="1.8" fill="#e35ccb"/>
<circle cx="754" cy="555.5" r="14.5" fill="#e6b4ec"/>
<line x1="754.0" y1="555.5" x2="748.0" y2="549.5" stroke="#e35ccb" stroke-width="1.3"/><circle cx="748.0" cy="549.5" r="1.4" fill="#e35ccb"/><line x1="754.0" y1="555.5" x2="755.5" y2="550.0" stroke="#e35ccb" stroke-width="1.3"/><circle cx="755.5" cy="550.0" r="1.4" fill="#e35ccb"/><line x1="754.0" y1="555.5" x2="760.0" y2="554.5" stroke="#e35ccb" stroke-width="1.3"/><circle cx="760.0" cy="554.5" r="1.4" fill="#e35ccb"/><line x1="754.0" y1="555.5" x2="758.5" y2="560.5" stroke="#e35ccb" stroke-width="1.3"/><circle cx="758.5" cy="560.5" r="1.4" fill="#e35ccb"/><line x1="754.0" y1="555.5" x2="751.5" y2="561.5" stroke="#e35ccb" stroke-width="1.3"/><circle cx="751.5" cy="561.5" r="1.4" fill="#e35ccb"/><line x1="754.0" y1="555.5" x2="748.0" y2="556.5" stroke="#e35ccb" stroke-width="1.3"/><circle cx="748.0" cy="556.5" r="1.4" fill="#e35ccb"/><circle cx="754.0" cy="555.5" r="1.8" fill="#e35ccb"/>
<circle cx="1003.5" cy="237" r="14.5" fill="#e6b4ec"/>
<line x1="1003.5" y1="237.0" x2="997.5" y2="231.0" stroke="#e35ccb" stroke-width="1.3"/><circle cx="997.5" cy="231.0" r="1.4" fill="#e35ccb"/><line x1="1003.5" y1="237.0" x2="1005.0" y2="231.5" stroke="#e35ccb" stroke-width="1.3"/><circle cx="1005.0" cy="231.5" r="1.4" fill="#e35ccb"/><line x1="1003.5" y1="237.0" x2="1009.5" y2="236.0" stroke="#e35ccb" stroke-width="1.3"/><circle cx="1009.5" cy="236.0" r="1.4" fill="#e35ccb"/><line x1="1003.5" y1="237.0" x2="1008.0" y2="242.0" stroke="#e35ccb" stroke-width="1.3"/><circle cx="1008.0" cy="242.0" r="1.4" fill="#e35ccb"/><line x1="1003.5" y1="237.0" x2="1001.0" y2="243.0" stroke="#e35ccb" stroke-width="1.3"/><circle cx="1001.0" cy="243.0" r="1.4" fill="#e35ccb"/><line x1="1003.5" y1="237.0" x2="997.5" y2="238.0" stroke="#e35ccb" stroke-width="1.3"/><circle cx="997.5" cy="238.0" r="1.4" fill="#e35ccb"/><circle cx="1003.5" cy="237.0" r="1.8" fill="#e35ccb"/>
<circle cx="1097" cy="261" r="14.5" fill="#e6b4ec"/>
<line x1="1097.0" y1="261.0" x2="1091.0" y2="255.0" stroke="#e35ccb" stroke-width="1.3"/><circle cx="1091.0" cy="255.0" r="1.4" fill="#e35ccb"/><line x1="1097.0" y1="261.0" x2="1098.5" y2="255.5" stroke="#e35ccb" stroke-width="1.3"/><circle cx="1098.5" cy="255.5" r="1.4" fill="#e35ccb"/><line x1="1097.0" y1="261.0" x2="1103.0" y2="260.0" stroke="#e35ccb" stroke-width="1.3"/><circle cx="1103.0" cy="260.0" r="1.4" fill="#e35ccb"/><line x1="1097.0" y1="261.0" x2="1101.5" y2="266.0" stroke="#e35ccb" stroke-width="1.3"/><circle cx="1101.5" cy="266.0" r="1.4" fill="#e35ccb"/><line x1="1097.0" y1="261.0" x2="1094.5" y2="267.0" stroke="#e35ccb" stroke-width="1.3"/><circle cx="1094.5" cy="267.0" r="1.4" fill="#e35ccb"/><line x1="1097.0" y1="261.0" x2="1091.0" y2="262.0" stroke="#e35ccb" stroke-width="1.3"/><circle cx="1091.0" cy="262.0" r="1.4" fill="#e35ccb"/><circle cx="1097.0" cy="261.0" r="1.8" fill="#e35ccb"/>
<circle cx="1146" cy="343" r="14.5" fill="#e6b4ec"/>
<line x1="1146.0" y1="343.0" x2="1140.0" y2="337.0" stroke="#e35ccb" stroke-width="1.3"/><circle cx="1140.0" cy="337.0" r="1.4" fill="#e35ccb"/><line x1="1146.0" y1="343.0" x2="1147.5" y2="337.5" stroke="#e35ccb" stroke-width="1.3"/><circle cx="1147.5" cy="337.5" r="1.4" fill="#e35ccb"/><line x1="1146.0" y1="343.0" x2="1152.0" y2="342.0" stroke="#e35ccb" stroke-width="1.3"/><circle cx="1152.0" cy="342.0" r="1.4" fill="#e35ccb"/><line x1="1146.0" y1="343.0" x2="1150.5" y2="348.0" stroke="#e35ccb" stroke-width="1.3"/><circle cx="1150.5" cy="348.0" r="1.4" fill="#e35ccb"/><line x1="1146.0" y1="343.0" x2="1143.5" y2="349.0" stroke="#e35ccb" stroke-width="1.3"/><circle cx="1143.5" cy="349.0" r="1.4" fill="#e35ccb"/><line x1="1146.0" y1="343.0" x2="1140.0" y2="344.0" stroke="#e35ccb" stroke-width="1.3"/><circle cx="1140.0" cy="344.0" r="1.4" fill="#e35ccb"/><circle cx="1146.0" cy="343.0" r="1.8" fill="#e35ccb"/>
<circle cx="1151" cy="431" r="14.5" fill="#e6b4ec"/>
<line x1="1151.0" y1="431.0" x2="1145.0" y2="425.0" stroke="#e35ccb" stroke-width="1.3"/><circle cx="1145.0" cy="425.0" r="1.4" fill="#e35ccb"/><line x1="1151.0" y1="431.0" x2="1152.5" y2="425.5" stroke="#e35ccb" stroke-width="1.3"/><circle cx="1152.5" cy="425.5" r="1.4" fill="#e35ccb"/><line x1="1151.0" y1="431.0" x2="1157.0" y2="430.0" stroke="#e35ccb" stroke-width="1.3"/><circle cx="1157.0" cy="430.0" r="1.4" fill="#e35ccb"/><line x1="1151.0" y1="431.0" x2="1155.5" y2="436.0" stroke="#e35ccb" stroke-width="1.3"/><circle cx="1155.5" cy="436.0" r="1.4" fill="#e35ccb"/><line x1="1151.0" y1="431.0" x2="1148.5" y2="437.0" stroke="#e35ccb" stroke-width="1.3"/><circle cx="1148.5" cy="437.0" r="1.4" fill="#e35ccb"/><line x1="1151.0" y1="431.0" x2="1145.0" y2="432.0" stroke="#e35ccb" stroke-width="1.3"/><circle cx="1145.0" cy="432.0" r="1.4" fill="#e35ccb"/><circle cx="1151.0" cy="431.0" r="1.8" fill="#e35ccb"/>
<circle cx="1111" cy="520.5" r="14.5" fill="#e6b4ec"/>
<line x1="1111.0" y1="520.5" x2="1105.0" y2="514.5" stroke="#e35ccb" stroke-width="1.3"/><circle cx="1105.0" cy="514.5" r="1.4" fill="#e35ccb"/><line x1="1111.0" y1="520.5" x2="1112.5" y2="515.0" stroke="#e35ccb" stroke-width="1.3"/><circle cx="1112.5" cy="515.0" r="1.4" fill="#e35ccb"/><line x1="1111.0" y1="520.5" x2="1117.0" y2="519.5" stroke="#e35ccb" stroke-width="1.3"/><circle cx="1117.0" cy="519.5" r="1.4" fill="#e35ccb"/><line x1="1111.0" y1="520.5" x2="1115.5" y2="525.5" stroke="#e35ccb" stroke-width="1.3"/><circle cx="1115.5" cy="525.5" r="1.4" fill="#e35ccb"/><line x1="1111.0" y1="520.5" x2="1108.5" y2="526.5" stroke="#e35ccb" stroke-width="1.3"/><circle cx="1108.5" cy="526.5" r="1.4" fill="#e35ccb"/><line x1="1111.0" y1="520.5" x2="1105.0" y2="521.5" stroke="#e35ccb" stroke-width="1.3"/><circle cx="1105.0" cy="521.5" r="1.4" fill="#e35ccb"/><circle cx="1111.0" cy="520.5" r="1.8" fill="#e35ccb"/>
<circle cx="1015.5" cy="554" r="14.5" fill="#e6b4ec"/>
<line x1="1015.5" y1="554.0" x2="1009.5" y2="548.0" stroke="#e35ccb" stroke-width="1.3"/><circle cx="1009.5" cy="548.0" r="1.4" fill="#e35ccb"/><line x1="1015.5" y1="554.0" x2="1017.0" y2="548.5" stroke="#e35ccb" stroke-width="1.3"/><circle cx="1017.0" cy="548.5" r="1.4" fill="#e35ccb"/><line x1="1015.5" y1="554.0" x2="1021.5" y2="553.0" stroke="#e35ccb" stroke-width="1.3"/><circle cx="1021.5" cy="553.0" r="1.4" fill="#e35ccb"/><line x1="1015.5" y1="554.0" x2="1020.0" y2="559.0" stroke="#e35ccb" stroke-width="1.3"/><circle cx="1020.0" cy="559.0" r="1.4" fill="#e35ccb"/><line x1="1015.5" y1="554.0" x2="1013.0" y2="560.0" stroke="#e35ccb" stroke-width="1.3"/><circle cx="1013.0" cy="560.0" r="1.4" fill="#e35ccb"/><line x1="1015.5" y1="554.0" x2="1009.5" y2="555.0" stroke="#e35ccb" stroke-width="1.3"/><circle cx="1009.5" cy="555.0" r="1.4" fill="#e35ccb"/><circle cx="1015.5" cy="554.0" r="1.8" fill="#e35ccb"/>
<circle cx="914.5" cy="538" r="14.5" fill="#e6b4ec"/>
<line x1="914.5" y1="538.0" x2="908.5" y2="532.0" stroke="#e35ccb" stroke-width="1.3"/><circle cx="908.5" cy="532.0" r="1.4" fill="#e35ccb"/><line x1="914.5" y1="538.0" x2="916.0" y2="532.5" stroke="#e35ccb" stroke-width="1.3"/><circle cx="916.0" cy="532.5" r="1.4" fill="#e35ccb"/><line x1="914.5" y1="538.0" x2="920.5" y2="537.0" stroke="#e35ccb" stroke-width="1.3"/><circle cx="920.5" cy="537.0" r="1.4" fill="#e35ccb"/><line x1="914.5" y1="538.0" x2="919.0" y2="543.0" stroke="#e35ccb" stroke-width="1.3"/><circle cx="919.0" cy="543.0" r="1.4" fill="#e35ccb"/><line x1="914.5" y1="538.0" x2="912.0" y2="544.0" stroke="#e35ccb" stroke-width="1.3"/><circle cx="912.0" cy="544.0" r="1.4" fill="#e35ccb"/><line x1="914.5" y1="538.0" x2="908.5" y2="539.0" stroke="#e35ccb" stroke-width="1.3"/><circle cx="908.5" cy="539.0" r="1.4" fill="#e35ccb"/><circle cx="914.5" cy="538.0" r="1.8" fill="#e35ccb"/>
<rect x="610.0" y="436.0" width="82.0" height="18.5" rx="8" fill="#262c38"/>
<text x="651" y="448.8" text-anchor="middle" font-size="9.8" fill="#e2e4e8">The Story o...</text>
<rect x="852.0" y="238.0" width="82.0" height="18.5" rx="8" fill="#262c38"/>
<text x="893" y="250.8" text-anchor="middle" font-size="9.8" fill="#e2e4e8">The Mystery...</text>
<rect x="951.0" y="409.0" width="82.0" height="18.5" rx="8" fill="#262c38"/>
<text x="992" y="421.8" text-anchor="middle" font-size="9.8" fill="#e2e4e8">Soldiers of t...</text>
<rect x="842.0" y="128.0" width="72.1" height="18.5" rx="8" fill="#262c38"/>
<text x="878" y="140.8" text-anchor="middle" font-size="9.8" fill="#e2e4e8">W.J. Lincoln</text>
<rect x="960.0" y="147.0" width="77.9" height="18.5" rx="8" fill="#262c38"/>
<text x="999" y="159.8" text-anchor="middle" font-size="9.8" fill="#e2e4e8">Fergus Hume</text>
<rect x="553.4" y="285.0" width="63.3" height="18.5" rx="8" fill="#262c38"/>
<text x="585" y="297.8" text-anchor="middle" font-size="9.8" fill="#e2e4e8">Nevin Tait</text>
<rect x="632.4" y="280.0" width="70.3" height="18.5" rx="8" fill="#262c38"/>
<text x="667.5" y="292.8" text-anchor="middle" font-size="9.8" fill="#e2e4e8">Charles Tait</text>
<rect x="475.0" y="340.0" width="72.0" height="18.5" rx="8" fill="#262c38"/>
<text x="511" y="352.8" text-anchor="middle" font-size="9.8" fill="#e2e4e8">Eric Chapus</text>
<rect x="448.2" y="425.5" width="81.6" height="18.5" rx="8" fill="#262c38"/>
<text x="489" y="438.3" text-anchor="middle" font-size="9.8" fill="#e2e4e8">Millard Joh...</text>
<rect x="787.0" y="385.0" width="68.0" height="18.5" rx="8" fill="#262c38"/>
<text x="821" y="397.8" text-anchor="middle" font-size="9.8" fill="#e2e4e8">Orrie Perry</text>
<rect x="762.0" y="478.5" width="82.0" height="18.5" rx="8" fill="#262c38"/>
<text x="803" y="491.3" text-anchor="middle" font-size="9.8" fill="#e2e4e8">Norman Ca...</text>
<rect x="473.1" y="510.0" width="59.8" height="18.5" rx="8" fill="#262c38"/>
<text x="503" y="522.8" text-anchor="middle" font-size="9.8" fill="#e2e4e8">John Tait</text>
<rect x="540.1" y="580.5" width="63.7" height="18.5" rx="8" fill="#262c38"/>
<text x="572" y="593.3" text-anchor="middle" font-size="9.8" fill="#e2e4e8">Bella Cola</text>
<rect x="624.5" y="595.5" width="73.0" height="18.5" rx="8" fill="#262c38"/>
<text x="661" y="608.3" text-anchor="middle" font-size="9.8" fill="#e2e4e8">W.A. Gibson</text>
<rect x="714.6" y="568.5" width="78.8" height="18.5" rx="8" fill="#262c38"/>
<text x="754" y="581.3" text-anchor="middle" font-size="9.8" fill="#e2e4e8">Elizabeth Tait</text>
<rect x="962.5" y="250.0" width="82.0" height="18.5" rx="8" fill="#262c38"/>
<text x="1003.5" y="262.8" text-anchor="middle" font-size="9.8" fill="#e2e4e8">Herbert Booth</text>
<rect x="1065.5" y="274.0" width="63.0" height="18.5" rx="8" fill="#262c38"/>
<text x="1097" y="286.8" text-anchor="middle" font-size="9.8" fill="#e2e4e8">Reg Perry</text>
<rect x="1104.8" y="356.0" width="82.4" height="18.5" rx="8" fill="#262c38"/>
<text x="1146" y="368.8" text-anchor="middle" font-size="9.8" fill="#e2e4e8">Harold Gr...</text>
<rect x="1115.8" y="444.0" width="70.4" height="18.5" rx="8" fill="#262c38"/>
<text x="1151" y="456.8" text-anchor="middle" font-size="9.8" fill="#e2e4e8">Mr. Graham</text>
<rect x="1073.0" y="533.5" width="75.9" height="18.5" rx="8" fill="#262c38"/>
<text x="1111" y="546.3" text-anchor="middle" font-size="9.8" fill="#e2e4e8">Beatrice Day</text>
<rect x="980.5" y="567.0" width="70.0" height="18.5" rx="8" fill="#262c38"/>
<text x="1015.5" y="579.8" text-anchor="middle" font-size="9.8" fill="#e2e4e8">John Jones</text>
<rect x="875.6" y="551.0" width="77.8" height="18.5" rx="8" fill="#262c38"/>
<text x="914.5" y="563.8" text-anchor="middle" font-size="9.8" fill="#e2e4e8">Joseph Perry</text>
<circle cx="878" cy="97.5" r="7" fill="#262c38"/><text x="878" y="100.7" text-anchor="middle" font-size="9" fill="#fff">1</text>
<circle cx="999" cy="116.5" r="7" fill="#262c38"/><text x="999" y="119.7" text-anchor="middle" font-size="9" fill="#fff">1</text>
</svg>
</div>
<div class="abs" style="left:225px;top:663px;width:1183px;height:1px;background:#c4cde0"></div>

<div class="panel" style="left:225px;top:669px;width:1183px;height:405.5px"></div>
<svg class="abs" style="left:235px;top:677px" width="14" height="14" viewBox="0 0 14 14"><rect x="0" y="0" width="14" height="2.4" fill="#15202e"/><rect x="0" y="4" width="3.4" height="9.5" fill="#15202e"/><rect x="5.3" y="4" width="3.4" height="9.5" fill="#15202e"/><rect x="10.6" y="4" width="3.4" height="9.5" fill="#15202e"/></svg>
<div class="t b" style="left:257.2px;top:679px;font-size:10.3px;color:#2b2f36">Table View</div>
<div class="sel" style="left:322px;top:671.5px;width:144px;height:24.5px"></div>
<div class="t" style="left:328.6px;top:679px;font-size:9.9px;color:#2b2f36">All Nodes</div>
<div class="chev" style="left:450px;top:680px"></div>
<svg class="abs" style="left:1383px;top:676px" width="12" height="15" viewBox="0 0 12 15"><path d="M4 0 H8 V5.5 H11 L6 11 L1 5.5 H4 Z" fill="#15263b"/><rect x="0.5" y="12.5" width="11" height="1.8" fill="#15263b"/></svg>
<div class="abs" style="left:225px;top:699px;width:1183px;height:58.5px;background:#e7e7e5"></div>
<div class="t b" style="left:231.7px;top:704.3px;font-size:10.1px;color:#5d6168">Visibility</div>
<div class="t b" style="left:303.3px;top:704.3px;font-size:10.1px;color:#5d6168">Node Id</div>
<div class="t b" style="left:462.2px;top:704.3px;font-size:10.1px;color:#5d6168">Node Type</div>
<div class="t b" style="left:620.7px;top:704.3px;font-size:10.1px;color:#5d6168">Display Name</div>
<div class="t b" style="left:779.4px;top:704.3px;font-size:10.1px;color:#5d6168">Display Description</div>
<div class="t b" style="left:1255.2px;top:704.3px;font-size:10.1px;color:#5d6168">Total Neighbors</div>
<div class="abs" style="left:303px;top:733px;width:147px;height:18.5px;background:#fbfbfb;border-radius:3px"></div><svg class="abs" style="left:311px;top:738.5px" width="7" height="8" viewBox="0 0 7 8"><path d="M0 0 H7 L4.3 3.5 V8 H2.7 V3.5 Z" fill="#8a8d92"/></svg><div class="t" style="left:321px;top:738.3px;font-size:9.2px;color:#9c9ea3">Filter...</div>
<div class="abs" style="left:462px;top:733px;width:146px;height:18.5px;background:#fbfbfb;border-radius:3px"></div><svg class="abs" style="left:470px;top:738.5px" width="7" height="8" viewBox="0 0 7 8"><path d="M0 0 H7 L4.3 3.5 V8 H2.7 V3.5 Z" fill="#8a8d92"/></svg><div class="t" style="left:480px;top:738.3px;font-size:9.2px;color:#9c9ea3">Filter...</div>
<div class="abs" style="left:620.5px;top:733px;width:146.5px;height:18.5px;background:#fbfbfb;border-radius:3px"></div><svg class="abs" style="left:628.5px;top:738.5px" width="7" height="8" viewBox="0 0 7 8"><path d="M0 0 H7 L4.3 3.5 V8 H2.7 V3.5 Z" fill="#8a8d92"/></svg><div class="t" style="left:638.5px;top:738.3px;font-size:9.2px;color:#9c9ea3">Filter...</div>
<div class="abs" style="left:778.5px;top:733px;width:464.5px;height:18.5px;background:#fbfbfb;border-radius:3px"></div><svg class="abs" style="left:786.5px;top:738.5px" width="7" height="8" viewBox="0 0 7 8"><path d="M0 0 H7 L4.3 3.5 V8 H2.7 V3.5 Z" fill="#8a8d92"/></svg><div class="t" style="left:796.5px;top:738.3px;font-size:9.2px;color:#9c9ea3">Filter...</div>
<div class="abs" style="left:1254px;top:733px;width:148px;height:18.5px;background:#fbfbfb;border-radius:3px"></div><svg class="abs" style="left:1261px;top:737.5px" width="9" height="10" viewBox="0 0 9 10"><path d="M1 1 L7 3.5 L1 6 M1 8.5 H8" fill="none" stroke="#8a8d92" stroke-width="1.2"/></svg><div class="t" style="left:1272px;top:738.3px;font-size:9.2px;color:#9c9ea3">Greater or equal than...</div>
<div class="abs" style="left:225px;top:780.1px;width:1183px;height:1px;background:#f0f0f2"></div>
<svg class="abs" style="left:252px;top:762.1px" width="18" height="14" viewBox="0 0 18 14"><path d="M1.2 7 C3.2 -0.8, 14.8 -0.8, 16.8 7 C14.8 14.8, 3.2 14.8, 1.2 7 Z" fill="none" stroke="#23364d" stroke-width="1.3"/><circle cx="9" cy="7" r="2.2" fill="none" stroke="#23364d" stroke-width="1.4"/></svg>
<div class="t" style="left:303.3px;top:763.8px;font-size:10.3px;color:#2b2f36">Nm1010955</div>
<div class="t" style="left:462.2px;top:763.8px;font-size:10.3px;color:#2b2f36">Artist</div>
<div class="t" style="left:620.7px;top:763.8px;font-size:10.3px;color:#2b2f36">Beatrice Day</div>
<div class="t" style="left:779.4px;top:763.8px;font-size:10.3px;color:#2b2f36">Artist</div>
<div class="t" style="left:1255.2px;top:763.8px;font-size:10.3px;color:#2b2f36">1</div>
<div class="abs" style="left:225px;top:803.2px;width:1183px;height:1px;background:#f0f0f2"></div>
<svg class="abs" style="left:252px;top:785.2px" width="18" height="14" viewBox="0 0 18 14"><path d="M1.2 7 C3.2 -0.8, 14.8 -0.8, 16.8 7 C14.8 14.8, 3.2 14.8, 1.2 7 Z" fill="none" stroke="#23364d" stroke-width="1.3"/><circle cx="9" cy="7" r="2.2" fill="none" stroke="#23364d" stroke-width="1.4"/></svg>
<div class="t" style="left:303.3px;top:787.0px;font-size:10.3px;color:#2b2f36">Nm0675239</div>
<div class="t" style="left:462.2px;top:787.0px;font-size:10.3px;color:#2b2f36">Artist</div>
<div class="t" style="left:620.7px;top:787.0px;font-size:10.3px;color:#2b2f36">Orrie Perry</div>
<div class="t" style="left:779.4px;top:787.0px;font-size:10.3px;color:#2b2f36">Artist</div>
<div class="t" style="left:1255.2px;top:787.0px;font-size:10.3px;color:#2b2f36">3</div>
<div class="abs" style="left:225px;top:826.4px;width:1183px;height:1px;background:#f0f0f2"></div>
<svg class="abs" style="left:252px;top:808.4px" width="18" height="14" viewBox="0 0 18 14"><path d="M1.2 7 C3.2 -0.8, 14.8 -0.8, 16.8 7 C14.8 14.8, 3.2 14.8, 1.2 7 Z" fill="none" stroke="#23364d" stroke-width="1.3"/><circle cx="9" cy="7" r="2.2" fill="none" stroke="#23364d" stroke-width="1.4"/></svg>
<div class="t" style="left:303.3px;top:810.1px;font-size:10.3px;color:#2b2f36">Nm0675260</div>
<div class="t" style="left:462.2px;top:810.1px;font-size:10.3px;color:#2b2f36">Artist</div>
<div class="t" style="left:620.7px;top:810.1px;font-size:10.3px;color:#2b2f36">Reg Perry</div>
<div class="t" style="left:779.4px;top:810.1px;font-size:10.3px;color:#2b2f36">Artist</div>
<div class="t" style="left:1255.2px;top:810.1px;font-size:10.3px;color:#2b2f36">1</div>
<div class="abs" style="left:225px;top:849.6px;width:1183px;height:1px;background:#f0f0f2"></div>
<svg class="abs" style="left:252px;top:831.6px" width="18" height="14" viewBox="0 0 18 14"><path d="M1.2 7 C3.2 -0.8, 14.8 -0.8, 16.8 7 C14.8 14.8, 3.2 14.8, 1.2 7 Z" fill="none" stroke="#23364d" stroke-width="1.3"/><circle cx="9" cy="7" r="2.2" fill="none" stroke="#23364d" stroke-width="1.4"/></svg>
<div class="t" style="left:303.3px;top:833.3px;font-size:10.3px;color:#2b2f36">Nm1011210</div>
<div class="t" style="left:462.2px;top:833.3px;font-size:10.3px;color:#2b2f36">Artist</div>
<div class="t" style="left:620.7px;top:833.3px;font-size:10.3px;color:#2b2f36">Mr. Graham</div>
<div class="t" style="left:779.4px;top:833.3px;font-size:10.3px;color:#2b2f36">Artist</div>
<div class="t" style="left:1255.2px;top:833.3px;font-size:10.3px;color:#2b2f36">1</div>
<div class="abs" style="left:225px;top:872.7px;width:1183px;height:1px;background:#f0f0f2"></div>
<svg class="abs" style="left:252px;top:854.7px" width="18" height="14" viewBox="0 0 18 14"><path d="M1.2 7 C3.2 -0.8, 14.8 -0.8, 16.8 7 C14.8 14.8, 3.2 14.8, 1.2 7 Z" fill="none" stroke="#23364d" stroke-width="1.3"/><circle cx="9" cy="7" r="2.2" fill="none" stroke="#23364d" stroke-width="1.4"/></svg>
<div class="t" style="left:303.3px;top:856.4px;font-size:10.3px;color:#2b2f36">Nm1012612</div>
<div class="t" style="left:462.2px;top:856.4px;font-size:10.3px;color:#2b2f36">Artist</div>
<div class="t" style="left:620.7px;top:856.4px;font-size:10.3px;color:#2b2f36">Harold Graham</div>
<div class="t" style="left:779.4px;top:856.4px;font-size:10.3px;color:#2b2f36">Artist</div>
<div class="t" style="left:1255.2px;top:856.4px;font-size:10.3px;color:#2b2f36">1</div>
<div class="abs" style="left:225px;top:895.9px;width:1183px;height:1px;background:#f0f0f2"></div>
<svg class="abs" style="left:252px;top:877.9px" width="18" height="14" viewBox="0 0 18 14"><path d="M1.2 7 C3.2 -0.8, 14.8 -0.8, 16.8 7 C14.8 14.8, 3.2 14.8, 1.2 7 Z" fill="none" stroke="#23364d" stroke-width="1.3"/><circle cx="9" cy="7" r="2.2" fill="none" stroke="#23364d" stroke-width="1.4"/></svg>
<div class="t" style="left:303.3px;top:879.6px;font-size:10.3px;color:#2b2f36">Nm1012621</div>
<div class="t" style="left:462.2px;top:879.6px;font-size:10.3px;color:#2b2f36">Artist</div>
<div class="t" style="left:620.7px;top:879.6px;font-size:10.3px;color:#2b2f36">John Jones</div>
<div class="t" style="left:779.4px;top:879.6px;font-size:10.3px;color:#2b2f36">Artist</div>
<div class="t" style="left:1255.2px;top:879.6px;font-size:10.3px;color:#2b2f36">1</div>
<div class="abs" style="left:225px;top:919.0px;width:1183px;height:1px;background:#f0f0f2"></div>
<svg class="abs" style="left:252px;top:901.0px" width="18" height="14" viewBox="0 0 18 14"><path d="M1.2 7 C3.2 -0.8, 14.8 -0.8, 16.8 7 C14.8 14.8, 3.2 14.8, 1.2 7 Z" fill="none" stroke="#23364d" stroke-width="1.3"/><circle cx="9" cy="7" r="2.2" fill="none" stroke="#23364d" stroke-width="1.4"/></svg>
<div class="t" style="left:303.3px;top:902.7px;font-size:10.3px;color:#2b2f36">Nm0095714</div>
<div class="t" style="left:462.2px;top:902.7px;font-size:10.3px;color:#2b2f36">Artist</div>
<div class="t" style="left:620.7px;top:902.7px;font-size:10.3px;color:#2b2f36">Herbert Booth</div>
<div class="t" style="left:779.4px;top:902.7px;font-size:10.3px;color:#2b2f36">Artist</div>
<div class="t" style="left:1255.2px;top:902.7px;font-size:10.3px;color:#2b2f36">1</div>
<div class="abs" style="left:225px;top:942.1px;width:1183px;height:1px;background:#f0f0f2"></div>
<svg class="abs" style="left:252px;top:924.1px" width="18" height="14" viewBox="0 0 18 14"><path d="M1.2 7 C3.2 -0.8, 14.8 -0.8, 16.8 7 C14.8 14.8, 3.2 14.8, 1.2 7 Z" fill="none" stroke="#23364d" stroke-width="1.3"/><circle cx="9" cy="7" r="2.2" fill="none" stroke="#23364d" stroke-width="1.4"/></svg>
<div class="t" style="left:303.3px;top:925.9px;font-size:10.3px;color:#2b2f36">Nm0675140</div>
<div class="t" style="left:462.2px;top:925.9px;font-size:10.3px;color:#2b2f36">Artist</div>
<div class="t" style="left:620.7px;top:925.9px;font-size:10.3px;color:#2b2f36">Joseph Perry</div>
<div class="t" style="left:779.4px;top:925.9px;font-size:10.3px;color:#2b2f36">Artist</div>
<div class="t" style="left:1255.2px;top:925.9px;font-size:10.3px;color:#2b2f36">1</div>
<div class="abs" style="left:225px;top:965.3px;width:1183px;height:1px;background:#f0f0f2"></div>
<svg class="abs" style="left:252px;top:947.3px" width="18" height="14" viewBox="0 0 18 14"><path d="M1.2 7 C3.2 -0.8, 14.8 -0.8, 16.8 7 C14.8 14.8, 3.2 14.8, 1.2 7 Z" fill="none" stroke="#23364d" stroke-width="1.3"/><circle cx="9" cy="7" r="2.2" fill="none" stroke="#23364d" stroke-width="1.4"/></svg>
<div class="t" style="left:303.3px;top:949.0px;font-size:10.3px;color:#2b2f36">Nm0511143</div>
<div class="t" style="left:462.2px;top:949.0px;font-size:10.3px;color:#2b2f36">Artist</div>
<div class="t" style="left:620.7px;top:949.0px;font-size:10.3px;color:#2b2f36">W.J. Lincoln</div>
<div class="t" style="left:779.4px;top:949.0px;font-size:10.3px;color:#2b2f36">Artist</div>
<div class="t" style="left:1255.2px;top:949.0px;font-size:10.3px;color:#2b2f36">2</div>
<div class="abs" style="left:225px;top:988.5px;width:1183px;height:1px;background:#f0f0f2"></div>
<svg class="abs" style="left:252px;top:970.5px" width="18" height="14" viewBox="0 0 18 14"><path d="M1.2 7 C3.2 -0.8, 14.8 -0.8, 16.8 7 C14.8 14.8, 3.2 14.8, 1.2 7 Z" fill="none" stroke="#23364d" stroke-width="1.3"/><circle cx="9" cy="7" r="2.2" fill="none" stroke="#23364d" stroke-width="1.4"/></svg>
<div class="t" style="left:303.3px;top:972.2px;font-size:10.3px;color:#2b2f36">Nm0401744</div>
<div class="t" style="left:462.2px;top:972.2px;font-size:10.3px;color:#2b2f36">Artist</div>
<div class="t" style="left:620.7px;top:972.2px;font-size:10.3px;color:#2b2f36">Fergus Hume</div>
<div class="t" style="left:779.4px;top:972.2px;font-size:10.3px;color:#2b2f36">Artist</div>
<div class="t" style="left:1255.2px;top:972.2px;font-size:10.3px;color:#2b2f36">2</div>
<div class="abs" style="left:297px;top:757.5px;width:1px;height:231.5px;background:#f4f4f6"></div>
<div class="abs" style="left:455.5px;top:757.5px;width:1px;height:231.5px;background:#f4f4f6"></div>
<div class="abs" style="left:614.5px;top:757.5px;width:1px;height:231.5px;background:#f4f4f6"></div>
<div class="abs" style="left:773px;top:757.5px;width:1px;height:231.5px;background:#f4f4f6"></div>
<div class="abs" style="left:1249px;top:757.5px;width:1px;height:231.5px;background:#f4f4f6"></div>
<div class="t" style="left:234.4px;top:1055.3px;font-size:10.4px;color:#a2a4a8">Displaying 1-10 of 22 results</div>
<div class="t" style="left:1161.3px;top:1055px;font-size:10px;color:#3a3e44">Page size:</div>
<div class="sel" style="left:1216px;top:1048px;width:42.7px;height:22.8px"></div>
<div class="t" style="left:1222px;top:1055px;font-size:10px;color:#3a3e44">10</div>
<div class="chev" style="left:1242px;top:1055.5px"></div>
<svg class="abs" style="left:1266px;top:1055px" width="10" height="10" viewBox="0 0 10 10"><rect x="1" y="1" width="1.6" height="8" fill="#9a9ca2"/><path d="M8.5 1 L3.5 5 L8.5 9Z" fill="#9a9ca2"/></svg>
<svg class="abs" style="left:1286px;top:1055px" width="10" height="10" viewBox="0 0 10 10"><path d="M7 1.5 L2.5 5 L7 8.5Z" fill="#9a9ca2"/></svg>
<div class="abs" style="left:1303.3px;top:1051.3px;width:16.7px;height:16.2px;background:#1d7ad6;border-radius:3px"></div>
<div class="t" style="left:1309px;top:1055px;font-size:9.8px;color:#fff">1</div>
<div class="abs" style="left:1323px;top:1051.3px;width:15px;height:16.2px;background:#ececee;border-radius:3px"></div>
<div class="t" style="left:1327.5px;top:1055px;font-size:9.8px;color:#4a4e55">2</div>
<div class="abs" style="left:1341px;top:1051.3px;width:16.5px;height:16.2px;background:#ececee;border-radius:3px"></div>
<div class="t" style="left:1346px;top:1055px;font-size:9.8px;color:#4a4e55">3</div>
<svg class="abs" style="left:1366px;top:1055px" width="10" height="10" viewBox="0 0 10 10"><path d="M3 1.5 L7.5 5 L3 8.5Z" fill="#1c2838"/></svg>
<svg class="abs" style="left:1385px;top:1055px" width="10" height="10" viewBox="0 0 10 10"><path d="M1.5 1 L6.5 5 L1.5 9Z" fill="#1c2838"/><rect x="7.4" y="1" width="1.6" height="8" fill="#1c2838"/></svg>

<div class="abs" style="left:1412px;top:38px;width:3px;height:1042px;background:#c5cbe4"></div>
<div class="abs" style="left:1415px;top:38px;width:34px;height:1042px;background:#d9f0f8"></div>
<div class="abs" style="left:1449px;top:37px;width:251px;height:1043px;background:#fbfbfc"></div>
<div class="abs" style="left:1415px;top:37px;width:285px;height:1px;background:#e2e2ea"></div>
<div class="abs" style="left:1420.2px;top:43.2px;width:21.6px;height:21.6px;border-radius:50%;background:#5a9fe9"></div>
<div class="abs" style="left:1420.2px;top:71.60000000000001px;width:21.6px;height:21.6px;border-radius:50%;background:#b5d5f2"></div>
<div class="abs" style="left:1420.2px;top:98.8px;width:21.6px;height:21.6px;border-radius:50%;background:#b5d5f2"></div>
<div class="abs" style="left:1420.2px;top:126.2px;width:21.6px;height:21.6px;border-radius:50%;background:#b5d5f2"></div>
<div class="abs" style="left:1420.2px;top:153.5px;width:21.6px;height:21.6px;border-radius:50%;background:#b5d5f2"></div>
<svg class="abs" style="left:1423px;top:47px" width="16" height="14" viewBox="0 0 16 14"><rect x="2" y="3" width="12" height="1.5" fill="#1c2f48"/><rect x="2" y="6.3" width="8" height="1.5" fill="#1c2f48"/><rect x="2" y="9.6" width="12" height="1.5" fill="#1c2f48"/></svg>
<svg class="abs" style="left:1425px;top:76px" width="12" height="13" viewBox="0 0 12 13"><path d="M1 1 H11 L7.2 6 V12 H4.8 V6 Z" fill="#15263b"/></svg>
<svg class="abs" style="left:1424px;top:102.5px" width="14" height="14" viewBox="0 0 14 14"><path d="M1 4 V1 H4 M10 1 H13 V4 M13 10 V13 H10 M4 13 H1 V10" fill="none" stroke="#15263b" stroke-width="1.4"/><path d="M9 4.5 L5 7 L9 9.5" fill="none" stroke="#15263b" stroke-width="1.2"/><circle cx="5" cy="7" r="1.2" fill="#15263b"/><circle cx="9" cy="4.5" r="1.1" fill="#15263b"/><circle cx="9" cy="9.5" r="1.1" fill="#15263b"/></svg>
<svg class="abs" style="left:1423px;top:129px" width="16" height="16" viewBox="0 0 16 16"><g stroke="#15263b" stroke-width="1.5"><line x1="8" y1="8" x2="2.5" y2="2.5"/><line x1="8" y1="8" x2="13" y2="3"/><line x1="8" y1="8" x2="14" y2="8.5"/><line x1="8" y1="8" x2="12.5" y2="13.5"/><line x1="8" y1="8" x2="3" y2="13"/><line x1="8" y1="8" x2="1.5" y2="8"/></g><g fill="#15263b"><circle cx="8" cy="8" r="2"/><circle cx="2.5" cy="2.5" r="1.5"/><circle cx="13" cy="3" r="1.5"/><circle cx="14" cy="8.5" r="1.5"/><circle cx="12.5" cy="13.5" r="1.5"/><circle cx="3" cy="13" r="1.5"/><circle cx="1.5" cy="8" r="1.5"/></g></svg>
<svg class="abs" style="left:1423px;top:156px" width="16" height="16" viewBox="0 0 16 16"><circle cx="3.5" cy="3.5" r="2.2" fill="none" stroke="#15263b" stroke-width="1.5"/><circle cx="12.5" cy="12.5" r="2.2" fill="none" stroke="#15263b" stroke-width="1.5"/><line x1="5" y1="5" x2="11" y2="11" stroke="#15263b" stroke-width="1.5"/></svg>
<div class="t b" style="left:1456.5px;top:48.3px;font-size:10.5px;color:#2b2f36">Details View</div>
<svg class="abs" style="left:1682px;top:49px" width="10" height="10" viewBox="0 0 10 10"><path d="M1.5 1.5 L8.5 8.5 M8.5 1.5 L1.5 8.5" stroke="#2b2f36" stroke-width="1.5"/></svg>
<div class="abs" style="left:1449px;top:68.5px;width:251px;height:1px;background:#ececf0"></div>
<div class="abs" style="left:1459.6px;top:80px;width:26px;height:26px;border-radius:50%;background:#cfe3f6"></div>
<svg class="abs" style="left:1464.6px;top:85px" width="16" height="16" viewBox="0 0 16 16"><g stroke="#2f78d8" stroke-width="1.2"><line x1="8" y1="8" x2="2.2" y2="1.8"/><line x1="8" y1="8" x2="9.9" y2="3.5"/><line x1="8" y1="8" x2="14.4" y2="7.1"/><line x1="8" y1="8" x2="13.1" y2="13.3"/><line x1="8" y1="8" x2="5.8" y2="13.6"/><line x1="8" y1="8" x2="2.4" y2="8.8"/></g><g fill="#2f78d8"><circle cx="8" cy="8" r="1.8"/><circle cx="2.2" cy="1.8" r="1.4"/><circle cx="9.9" cy="3.5" r="1.4"/><circle cx="14.4" cy="7.1" r="1.4"/><circle cx="13.1" cy="13.3" r="1.4"/><circle cx="5.8" cy="13.6" r="1.4"/><circle cx="2.4" cy="8.8" r="1.4"/></g></svg>
<div class="t b" style="left:1491.7px;top:82.7px;font-size:10.1px;color:#2b2f36">Movie</div>
<div class="t" style="left:1491.7px;top:94.8px;font-size:10.4px;color:#5a5e65">The Story of the Kelly Gang</div>
<div class="abs" style="left:1449px;top:118.5px;width:251px;height:1px;background:#ececf0"></div>
<div class="t b" style="left:1459.6px;top:133.5px;font-size:10.3px;color:#3a3e44">Neighbors</div>
<div class="abs" style="left:1514.8px;top:131px;width:27px;height:14.7px;border-radius:7.35px;background:#cde5f8"></div>
<div class="t" style="left:1522px;top:133.8px;font-size:9.6px;color:#3c8ad8">10</div>
<div class="t" style="left:1459.6px;top:153.3px;font-size:10.2px;color:#5a5e65">Outgoing: <b style="color:#2b2f36">10</b></div>
<div class="t" style="left:1531.9px;top:153.3px;font-size:10.2px;color:#5a5e65">Incoming: <b style="color:#2b2f36">0</b></div>
<div class="t b" style="left:1459.6px;top:189.3px;font-size:10.5px;color:#3a3e44">Properties</div>
<div class="t" style="left:1459.6px;top:217.3px;font-size:9px;color:#6a6e75">Node Id</div>
<div class="t b" style="left:1459.8px;top:232.4px;font-size:10.4px;color:#3a3e44;letter-spacing:0.6px">tt0000574</div>
<div class="abs" style="left:1603px;top:212.2px;width:86px;height:18.5px;background:#e5e5e7;border-radius:9.25px"></div><div class="t" style="left:1609px;top:215.3px;font-size:9.6px;color:#9a9ca1">Display as...</div><div class="abs" style="left:1674px;top:216.8px;width:5.5px;height:5.5px;border-right:1.5px solid #2b2f36;border-bottom:1.5px solid #2b2f36;transform:rotate(45deg)"></div>
<div class="abs" style="left:1459px;top:248.6px;width:230px;height:1px;background:#f0f0f3"></div>
<div class="t" style="left:1459.6px;top:260.8px;font-size:9px;color:#6a6e75">Node Type</div>
<div class="t b" style="left:1459.8px;top:275.9px;font-size:10.4px;color:#3a3e44;letter-spacing:0">Movie</div>
<div class="abs" style="left:1603px;top:255.7px;width:86px;height:18.5px;background:#1d7ad6;border-radius:9.25px"></div><div class="t" style="left:1609px;top:258.8px;font-size:9.6px;color:#ffffff">Display Desc</div><div class="abs" style="left:1674px;top:260.3px;width:5.5px;height:5.5px;border-right:1.5px solid #ffffff;border-bottom:1.5px solid #ffffff;transform:rotate(45deg)"></div>
<div class="abs" style="left:1459px;top:292.1px;width:230px;height:1px;background:#f0f0f3"></div>
<div class="t" style="left:1459.6px;top:304.2px;font-size:9px;color:#6a6e75">Average Rating</div>
<div class="t b" style="left:1459.8px;top:319.3px;font-size:10.4px;color:#3a3e44;letter-spacing:0.6px">6.2</div>
<div class="abs" style="left:1603px;top:299.1px;width:86px;height:18.5px;background:#e5e5e7;border-radius:9.25px"></div><div class="t" style="left:1609px;top:302.2px;font-size:9.6px;color:#9a9ca1">Display as...</div><div class="abs" style="left:1674px;top:303.7px;width:5.5px;height:5.5px;border-right:1.5px solid #2b2f36;border-bottom:1.5px solid #2b2f36;transform:rotate(45deg)"></div>
<div class="abs" style="left:1459px;top:335.5px;width:230px;height:1px;background:#f0f0f3"></div>
<div class="t" style="left:1459.6px;top:347.7px;font-size:9px;color:#6a6e75">Num Votes</div>
<div class="t b" style="left:1459.8px;top:362.8px;font-size:10.4px;color:#3a3e44;letter-spacing:0.6px">499</div>
<div class="abs" style="left:1603px;top:342.6px;width:86px;height:18.5px;background:#e5e5e7;border-radius:9.25px"></div><div class="t" style="left:1609px;top:345.7px;font-size:9.6px;color:#9a9ca1">Display as...</div><div class="abs" style="left:1674px;top:347.2px;width:5.5px;height:5.5px;border-right:1.5px solid #2b2f36;border-bottom:1.5px solid #2b2f36;transform:rotate(45deg)"></div>
<div class="abs" style="left:1459px;top:379.0px;width:230px;height:1px;background:#f0f0f3"></div>
<div class="t" style="left:1459.6px;top:391.1px;font-size:9px;color:#6a6e75">Runtime</div>
<div class="t b" style="left:1459.8px;top:406.2px;font-size:10.4px;color:#3a3e44;letter-spacing:0.6px">70</div>
<div class="abs" style="left:1603px;top:386.0px;width:86px;height:18.5px;background:#e5e5e7;border-radius:9.25px"></div><div class="t" style="left:1609px;top:389.1px;font-size:9.6px;color:#9a9ca1">Display as...</div><div class="abs" style="left:1674px;top:390.6px;width:5.5px;height:5.5px;border-right:1.5px solid #2b2f36;border-bottom:1.5px solid #2b2f36;transform:rotate(45deg)"></div>
<div class="abs" style="left:1459px;top:422.4px;width:230px;height:1px;background:#f0f0f3"></div>
<div class="t" style="left:1459.6px;top:434.6px;font-size:9px;color:#6a6e75">Title</div>
<div class="t b" style="left:1459.8px;top:449.7px;font-size:10.4px;color:#3a3e44;letter-spacing:0">The Story of the Kelly Gang</div>
<div class="abs" style="left:1603px;top:429.5px;width:86px;height:18.5px;background:#1d7ad6;border-radius:9.25px"></div><div class="t" style="left:1609px;top:432.6px;font-size:9.6px;color:#ffffff">Display Name</div><div class="abs" style="left:1674px;top:434.1px;width:5.5px;height:5.5px;border-right:1.5px solid #ffffff;border-bottom:1.5px solid #ffffff;transform:rotate(45deg)"></div>
<div class="abs" style="left:1459px;top:465.9px;width:230px;height:1px;background:#f0f0f3"></div>
<div class="t" style="left:1459.6px;top:478.0px;font-size:9px;color:#6a6e75">Year</div>
<div class="t b" style="left:1459.8px;top:493.1px;font-size:10.4px;color:#3a3e44;letter-spacing:0.6px">1906</div>
<div class="abs" style="left:1603px;top:472.9px;width:86px;height:18.5px;background:#e5e5e7;border-radius:9.25px"></div><div class="t" style="left:1609px;top:476.0px;font-size:9.6px;color:#9a9ca1">Display as...</div><div class="abs" style="left:1674px;top:477.5px;width:5.5px;height:5.5px;border-right:1.5px solid #2b2f36;border-bottom:1.5px solid #2b2f36;transform:rotate(45deg)"></div>
</body></html>
